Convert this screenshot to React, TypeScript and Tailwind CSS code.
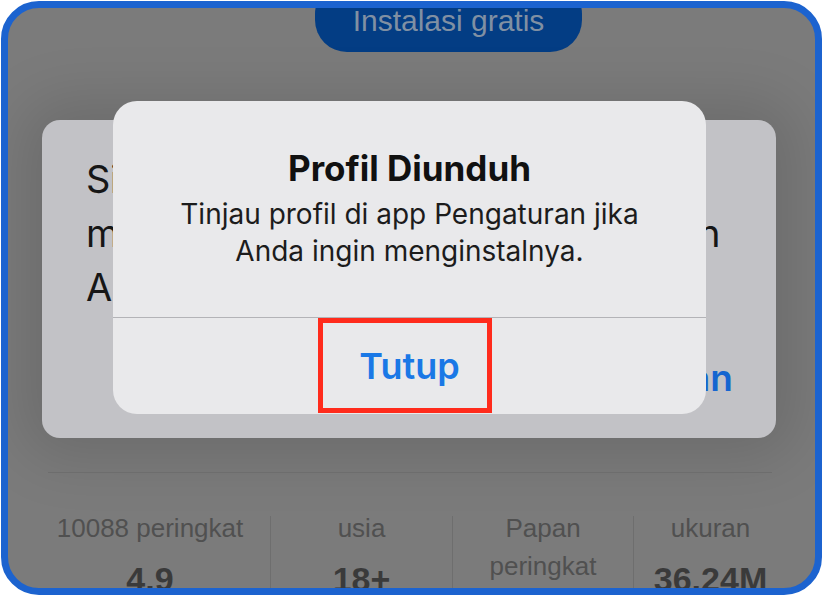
const STATS = [
  { label: ["10088 peringkat"], value: "4.9", width: "w-[240px]" },
  { label: ["usia"], value: "18+", width: "w-[182px]" },
  { label: ["Papan", "peringkat"], value: "#12", width: "w-[181px]" },
  { label: ["ukuran"], value: "36.24M", width: "w-[154px]" },
];

function StoreBackground() {
  return (
    <div className="flex flex-col font-['Liberation_Sans',Arial,sans-serif]">
      {/* install button, cut off by the top edge */}
      <div className="ml-[307px] -mt-[26px] flex h-[70px] w-[267px] justify-center rounded-[32px] bg-[#033d84] pt-[22px]">
        <span className="text-[30px] leading-[34px] text-[#8090a3]">
          Instalasi gratis
        </span>
      </div>

      {/* first alert, dimmed behind the second one */}
      <div className="ml-[34px] mt-[68px] flex h-[318px] w-[734px] flex-col rounded-[18px] bg-[#c2c2c6] px-[44px] pt-[32px] font-['Inter',sans-serif] shadow-[0_0_60px_20px_rgba(0,0,0,0.12)]">
        <div className="whitespace-nowrap text-[38px] leading-[54px] tracking-[-0.5px] text-[#161616]">
          <div>Situs web ini mencoba</div>
          <div className="flex justify-between">
            <span>mengunduh</span>
            <span className="mr-[12px]">profil. Izinkan</span>
          </div>
          <div>Anda mengizinkannya?</div>
        </div>
        <div className="mt-[42px] flex justify-between whitespace-nowrap text-[37px] font-semibold leading-[44px] text-[#1565d0]">
          <span className="ml-[110px]">Abaikan</span>
          <span className="-mr-[1px]">Izinkan</span>
        </div>
      </div>

      <div className="ml-[40px] mt-[34px] h-px w-[724px] bg-[#6d6d6d]" />

      <div className="ml-[22px] mt-[43px] flex">
        {STATS.map((stat, i) => (
          <div
            key={stat.value}
            className={`${stat.width} flex flex-col items-center ${
              i > 0 ? "border-l border-[#6e6e6e]" : ""
            }`}
          >
            <div className="-mt-[7px] flex flex-col items-center text-[26px] leading-[38px] text-[#505050]">
              {stat.label.map((line) => (
                <span key={line}>{line}</span>
              ))}
            </div>
            <span className="mt-[12px] text-[34px] font-bold leading-[40px] text-[#3a3a3a]">
              {stat.value}
            </span>
          </div>
        ))}
      </div>
    </div>
  );
}

function ProfileAlert() {
  return (
    <div className="absolute left-[105px] top-[93px] flex h-[313px] w-[593px] flex-col items-center rounded-[24px] bg-[#e9e9eb] font-['Inter',sans-serif]">
      <h2 className="pt-[47px] text-[35px] font-bold leading-[40px] text-[#111]">
        Profil Diunduh
      </h2>
      <p className="mt-[8px] text-center text-[28px] leading-[37px] text-[#1c1c1c]">
        Tinjau profil di app Pengaturan jika
        <br />
        Anda ingin menginstalnya.
      </p>
      <div className="mt-auto h-px w-full bg-[#b3b3b7]" />
      <button
        type="button"
        className="flex h-[96px] w-full items-center justify-center text-[36px] font-semibold leading-[44px] text-[#1a78e6]"
      >
        Tutup
      </button>

      {/* highlight box */}
      <div className="absolute left-[205px] top-[217px] h-[95px] w-[174px] border-[5px] border-[#ff2b1c]" />
    </div>
  );
}

export default function App() {
  return (
    <div className="h-[595px] w-[822px] bg-white pl-[1px] pt-[1px]">
      <div className="relative h-[594px] w-[821px] overflow-hidden rounded-[38px] border-[7px] border-[#1c63cf] bg-[#7b7b7b]">
        <StoreBackground />
        <ProfileAlert />
      </div>
    </div>
  );
}
